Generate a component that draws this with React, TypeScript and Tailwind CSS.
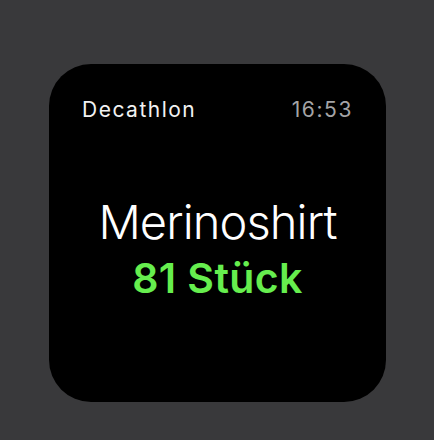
export default function App() {
  return (
    <div className="w-[434px] h-[440px] bg-[#39393b] pt-[64px] pl-[49px]" style={{ fontFamily: "Inter, 'Liberation Sans', sans-serif" }}>
      <div className="w-[337px] h-[338px] bg-black rounded-[42px] flex flex-col">
        {/* Header */}
        <div className="flex items-center justify-between pl-[33px] pr-[33px] pt-[34px]">
          <span className="text-[#f2f2f2] text-[21px] leading-6 tracking-[1.5px]">Decathlon</span>
          <span className="text-[#a4a4a6] text-[21px] leading-6 tracking-[1.6px]">16:53</span>
        </div>

        {/* Product */}
        <div className="flex flex-col items-center mt-[72px]">
          <div className="text-white text-[47px] leading-[56px] font-light tracking-[-0.9px]">Merinoshirt</div>
          <div className="text-[#66ee4e] text-[41px] leading-[48px] font-semibold tracking-[0.4px] mt-[4px]">81 Stück</div>
        </div>
      </div>
    </div>
  );
}
